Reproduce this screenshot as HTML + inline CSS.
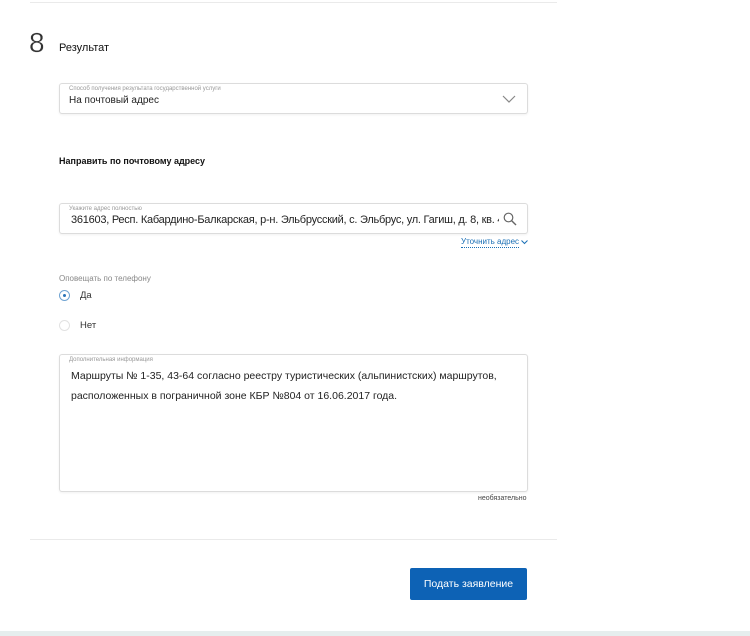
<!DOCTYPE html>
<html><head><meta charset="utf-8"><style>
*{margin:0;padding:0;box-sizing:border-box}
body{width:750px;height:636px;background:#fff;position:relative;overflow:hidden;font-family:"Liberation Sans",sans-serif;color:#222}
.a{position:absolute}
.box{position:absolute;border:1px solid #dcdcdc;border-radius:3px;background:#fff;box-shadow:0 1px 2px rgba(0,0,0,.06)}
.lbl{position:absolute;font-size:6px;color:#999;white-space:nowrap}
</style></head><body>
<div class="a" style="left:30px;top:2px;width:527px;height:1px;background:#eaeaea"></div>
<div class="a" style="left:29px;top:28px;font-size:28px;color:#333;line-height:30px;-webkit-text-stroke:0.3px #fff">8</div>
<div class="a" style="left:59px;top:42px;font-size:11px;color:#111">Результат</div>
<div class="box" style="left:59px;top:83px;width:469px;height:31px">
 <div class="lbl" style="left:9px;top:2px">Способ получения результата государственной услуги</div>
 <div class="a" style="left:9px;top:11px;font-size:10px;color:#222">На почтовый адрес</div>
 <svg class="a" style="left:442px;top:11px" width="14" height="9" viewBox="0 0 14 9"><path d="M1 1l6 6 6-6" fill="none" stroke="#888" stroke-width="1.2"/></svg>
</div>
<div class="a" style="left:59px;top:156px;font-size:9px;font-weight:bold;color:#111">Направить по почтовому адресу</div>
<div class="box" style="left:59px;top:203px;width:469px;height:31px">
 <div class="lbl" style="left:9px;top:2px">Укажите адрес полностью</div>
 <div class="a" style="left:11px;top:10px;font-size:11px;letter-spacing:-0.25px;color:#222;white-space:nowrap;width:428px;overflow:hidden">361603, Респ. Кабардино-Балкарская, р-н. Эльбрусский, с. Эльбрус, ул. Гагиш, д. 8, кв. 46</div>
 <svg class="a" style="left:443px;top:8px" width="14" height="14" viewBox="0 0 14 14"><circle cx="5.5" cy="5.5" r="4.3" fill="none" stroke="#666" stroke-width="1.2"/><path d="M8.7 8.7L13 13" stroke="#666" stroke-width="1.4"/></svg>
</div>
<div class="a" style="left:461px;top:237px;font-size:8px;color:#1a6fb5;border-bottom:1px dotted #1a6fb5;line-height:10px">Уточнить адрес</div>
<svg class="a" style="left:521px;top:240px" width="7" height="5" viewBox="0 0 7 5"><path d="M.5.5l3 3 3-3" fill="none" stroke="#1a6fb5"/></svg>
<div class="a" style="left:59px;top:274px;font-size:8px;color:#888">Оповещать по телефону</div>
<div class="a" style="left:59px;top:290px;width:11px;height:11px;border-radius:50%;border:1px solid #6fa3d2"><div class="a" style="left:3px;top:3px;width:3px;height:3px;border-radius:50%;background:#2a73b8"></div></div>
<div class="a" style="left:80px;top:290px;font-size:9.5px;color:#333">Да</div>
<div class="a" style="left:59px;top:320px;width:11px;height:11px;border-radius:50%;border:1px solid #e2e2e2"></div>
<div class="a" style="left:80px;top:320px;font-size:9.5px;color:#333">Нет</div>
<div class="box" style="left:59px;top:354px;width:469px;height:138px">
 <div class="lbl" style="left:9px;top:2px">Дополнительная информация</div>
 <div class="a" style="left:11px;top:11px;width:455px;font-size:10.5px;line-height:20px;color:#222">Маршруты № 1-35, 43-64 согласно реестру туристических (альпинистских) маршрутов, расположенных в пограничной зоне КБР №804 от 16.06.2017 года.</div>
</div>
<div class="a" style="left:478px;top:495px;font-size:7px;color:#444">необязательно</div>
<div class="a" style="left:30px;top:539px;width:527px;height:1px;background:#eaeaea"></div>
<div class="a" style="left:410px;top:568px;width:117px;height:32px;background:#0d62b5;border-radius:2px;color:#fff;font-size:10.5px;text-align:center;line-height:32px">Подать заявление</div>
<div class="a" style="left:0;top:631px;width:750px;height:5px;background:#e6eeee"></div>
</body></html>
